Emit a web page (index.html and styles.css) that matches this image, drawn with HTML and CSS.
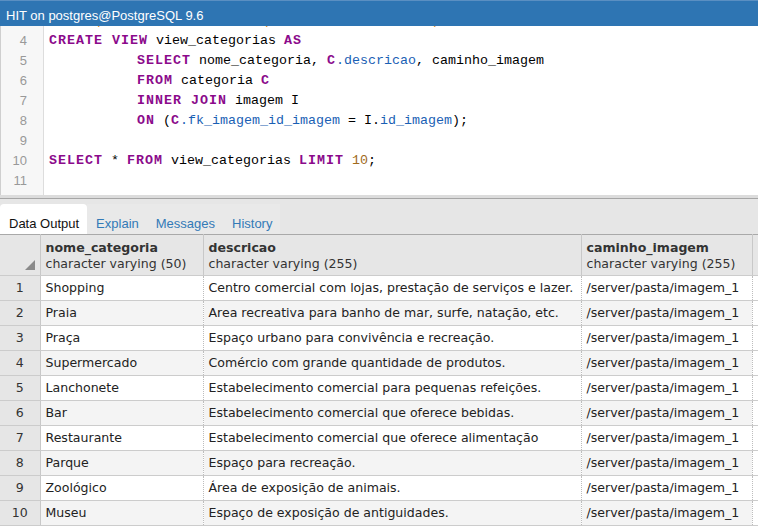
FILE: index.html
```html
<!DOCTYPE html>
<html>
<head>
<meta charset="utf-8">
<link rel="stylesheet" href="styles.css">
</head>
<body>
<div class="app">
  <div class="titlebar">HIT on postgres@PostgreSQL 9.6</div>
  <div class="editor">
    <div class="scroller">
      <div class="gutter">
        <div class="ln"></div>
        <div class="ln">4</div>
        <div class="ln">5</div>
        <div class="ln">6</div>
        <div class="ln">7</div>
        <div class="ln">8</div>
        <div class="ln">9</div>
        <div class="ln">10</div>
        <div class="ln">11</div>
        <div class="ln">12</div>
      </div>
      <div class="code">
        <div class="line">      <span class="str">p</span>                    <span class="str">p</span>                    <span class="str">p</span></div>
        <div class="line"><span class="kw">CREATE VIEW</span> view_categorias <span class="kw">AS</span></div>
        <div class="line">           <span class="kw">SELECT</span> nome_categoria, <span class="kw">C</span><span class="id">.descricao</span>, caminho_imagem</div>
        <div class="line">           <span class="kw">FROM</span> categoria <span class="kw">C</span></div>
        <div class="line">           <span class="kw">INNER JOIN</span> imagem I</div>
        <div class="line">           <span class="kw">ON</span> (<span class="kw">C</span><span class="id">.fk_imagem_id_imagem</span> = I.<span class="id">id_imagem</span>);</div>
        <div class="line"> </div>
        <div class="line"><span class="kw">SELECT</span> * <span class="kw">FROM</span> view_categorias <span class="kw">LIMIT</span> <span class="num">10</span>;</div>
        <div class="line"> </div>
        <div class="line"><span class="str">'</span></div>
      </div>
    </div>
  </div>
  <div class="hscroll"></div>
  <div class="tabs">
    <div class="tab active">Data Output</div>
    <div class="tab">Explain</div>
    <div class="tab">Messages</div>
    <div class="tab">History</div>
  </div>
  <table class="grid">
    <colgroup>
      <col class="c0"><col class="c1"><col class="c2"><col class="c3"><col class="c4">
    </colgroup>
    <thead>
      <tr>
        <th class="corner"><span class="tri"></span></th>
        <th><div class="hname">nome_categoria</div><div class="htype">character varying (50)</div></th>
        <th><div class="hname">descricao</div><div class="htype">character varying (255)</div></th>
        <th><div class="hname">caminho_imagem</div><div class="htype">character varying (255)</div></th>
        <th class="fill"></th>
      </tr>
    </thead>
    <tbody>
      <tr><td class="rn">1</td><td>Shopping</td><td>Centro comercial com lojas, prestação de serviços e lazer.</td><td>/server/pasta/imagem_1</td><td class="fill"></td></tr>
      <tr><td class="rn">2</td><td>Praia</td><td>Area recreativa para banho de mar, surfe, natação, etc.</td><td>/server/pasta/imagem_1</td><td class="fill"></td></tr>
      <tr><td class="rn">3</td><td>Praça</td><td>Espaço urbano para convivência e recreação.</td><td>/server/pasta/imagem_1</td><td class="fill"></td></tr>
      <tr><td class="rn">4</td><td>Supermercado</td><td>Comércio com grande quantidade de produtos.</td><td>/server/pasta/imagem_1</td><td class="fill"></td></tr>
      <tr><td class="rn">5</td><td>Lanchonete</td><td>Estabelecimento comercial para pequenas refeições.</td><td>/server/pasta/imagem_1</td><td class="fill"></td></tr>
      <tr><td class="rn">6</td><td>Bar</td><td>Estabelecimento comercial que oferece bebidas.</td><td>/server/pasta/imagem_1</td><td class="fill"></td></tr>
      <tr><td class="rn">7</td><td>Restaurante</td><td>Estabelecimento comercial que oferece alimentação</td><td>/server/pasta/imagem_1</td><td class="fill"></td></tr>
      <tr><td class="rn">8</td><td>Parque</td><td>Espaço para recreação.</td><td>/server/pasta/imagem_1</td><td class="fill"></td></tr>
      <tr><td class="rn">9</td><td>Zoológico</td><td>Área de exposição de animais.</td><td>/server/pasta/imagem_1</td><td class="fill"></td></tr>
      <tr><td class="rn">10</td><td>Museu</td><td>Espaço de exposição de antiguidades.</td><td>/server/pasta/imagem_1</td><td class="fill"></td></tr>
    </tbody>
  </table>
</div>
</body>
</html>
```
FILE: styles.css
```css
html, body {
  margin: 0;
  padding: 0;
  background: #ffffff;
}
.app {
  width: 758px;
  height: 529px;
  overflow: hidden;
  background: #ffffff;
}
.titlebar {
  height: 26px;
  box-sizing: border-box;
  padding: 3px 0 0 6px;
  line-height: 23px;
  background: #2e75b3;
  color: #ffffff;
  font-family: "Liberation Sans", Arial, sans-serif;
  font-size: 13px;
  border-top: 1px solid #5a8fc2;
}
.editor {
  height: 169px;
  overflow: hidden;
  border-left: 1px solid #cfcfcf;
  box-sizing: border-box;
}
.scroller {
  display: flex;
  margin-top: -15px;
}
.gutter {
  width: 43px;
  flex: none;
  background: #f7f7f7;
  border-right: 1px solid #dddddd;
  box-sizing: border-box;
  padding-right: 16px;
  text-align: right;
  font-family: "Liberation Sans", Arial, sans-serif;
  font-size: 13px;
  color: #999999;
  height: 220px;
}
.ln {
  height: 20px;
  line-height: 20px;
}
.code {
  padding-left: 5px;
  font-family: "Liberation Mono", "Courier New", monospace;
  font-size: 13.33px;
  color: #000000;
}
.line {
  height: 20px;
  line-height: 20px;
  white-space: pre;
}
.kw {
  color: #8b0a8b;
  font-weight: bold;
  letter-spacing: 1px;
}
.id {
  color: #1a5fb4;
}
.num {
  color: #a06a1c;
}
.str {
  color: #e08a1a;
}
.hscroll {
  height: 3px;
  background: #dcdcdc;
  border-bottom: 1px solid #a6a6a6;
}
.tabs {
  height: 35px;
  box-sizing: border-box;
  background: #e6e6e6;
  display: flex;
  align-items: flex-end;
  font-family: "Liberation Sans", Arial, sans-serif;
  font-size: 13px;
}
.tab {
  height: 30px;
  box-sizing: border-box;
  padding: 12px 8px 0 9px;
  line-height: 16px;
  color: #337ab7;
  background: #e9e9e9;
}
.tab.active {
  background: #ffffff;
  color: #111111;
  border-radius: 4px 4px 0 0;
}
.grid {
  border-collapse: collapse;
  table-layout: fixed;
  width: 758px;
  font-family: "DejaVu Sans", Verdana, sans-serif;
  font-size: 12.55px;
  color: #222222;
}
.c0 { width: 40px; }
.c1 { width: 163px; }
.c2 { width: 378px; }
.c3 { width: 171px; }
.c4 { width: 6px; }
.grid th {
  background: #e6e6e6;
  border-top: 1px solid #a9a9a9;
  border-bottom: 1px solid #cccccc;
  border-right: 1px solid #c8c8c8;
  text-align: left;
  font-weight: normal;
  padding: 5px 0 3px 5px;
  vertical-align: top;
  height: 31px;
  color: #333333;
  white-space: nowrap;
  overflow: hidden;
}
.grid th.fill {
  border-right: none;
  padding: 0;
}
.hname {
  font-weight: bold;
  line-height: 16px;
  color: #333333;
}
.htype {
  line-height: 16px;
}
.corner {
  position: relative;
}
.tri {
  position: absolute;
  right: 5px;
  bottom: 5px;
  width: 0;
  height: 0;
  border-style: solid;
  border-width: 0 0 10px 10px;
  border-color: transparent transparent #8a8a8a transparent;
}
.grid td {
  height: 24px;
  padding: 0 0 0 5px;
  border-bottom: 1px solid #cccccc;
  border-right: 1px dotted #bdbdbd;
  white-space: nowrap;
  overflow: hidden;
  line-height: 24px;
}
.grid tbody tr:nth-child(even) td {
  background: #f4f4f4;
}
.grid td.rn {
  background: #e6e6e6;
  text-align: center;
  padding: 0;
  color: #333333;
  border-right: 1px solid #c8c8c8;
}
.grid tbody tr:nth-child(even) td.rn {
  background: #e6e6e6;
}
.grid td.fill {
  padding: 0;
  border-right: none;
  background: #ffffff;
}
.grid tbody tr:nth-child(even) td.fill {
  background: #ffffff;
}
```
